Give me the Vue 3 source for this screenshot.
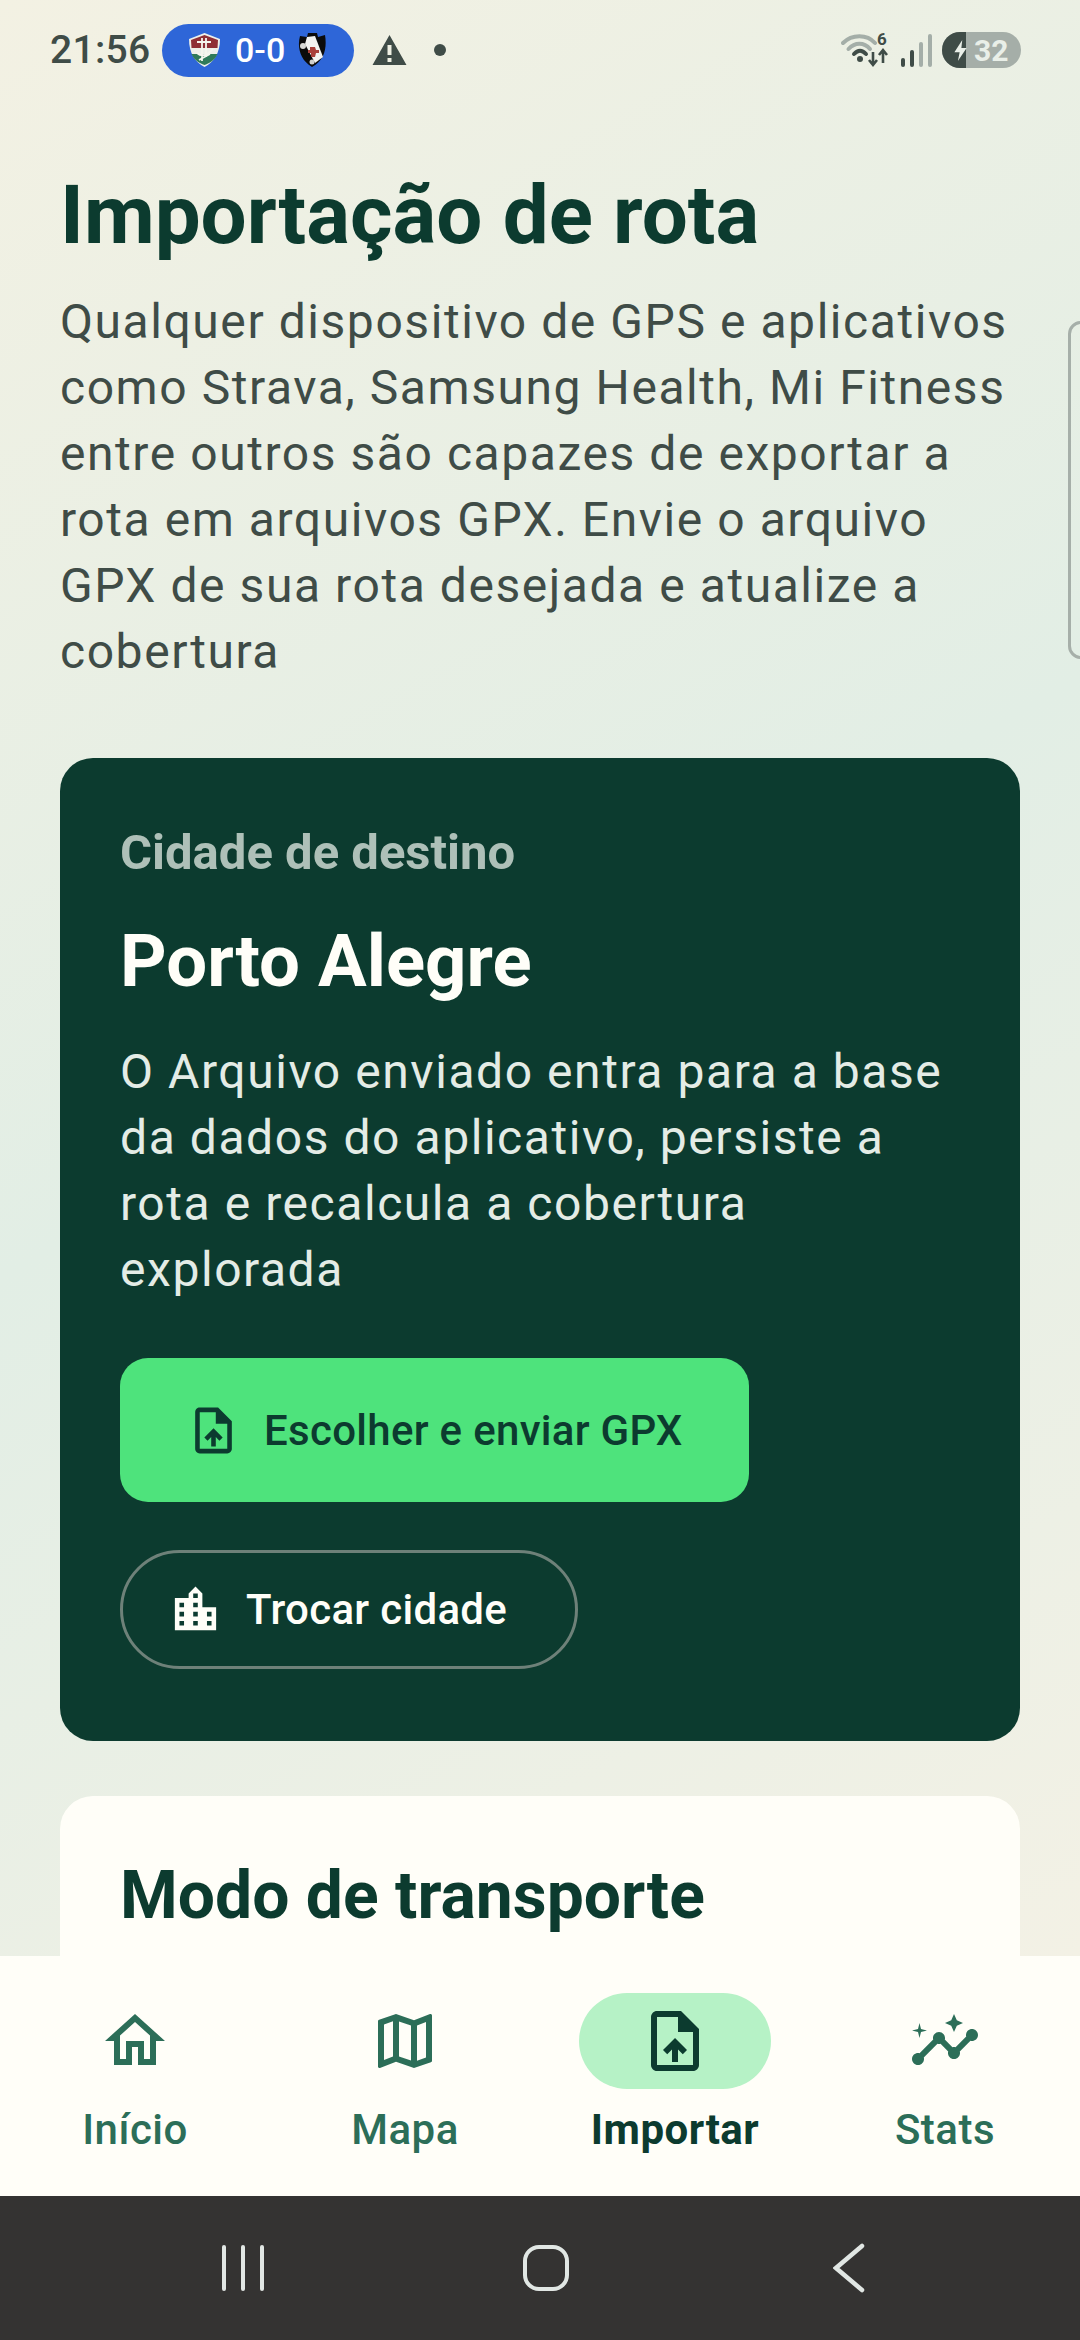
<script setup>
const lines1 = ['Qualquer dispositivo de GPS e aplicativos','como Strava, Samsung Health, Mi Fitness','entre outros são capazes de exportar a','rota em arquivos GPX. Envie o arquivo','GPX de sua rota desejada e atualize a','cobertura']
const lines2 = ['O Arquivo enviado entra para a base','da dados do aplicativo, persiste a','rota e recalcula a cobertura','explorada']
const UPLOAD = 'M14 2H6c-1.1 0-1.99.9-1.99 2L4 20c0 1.1.89 2 1.99 2H18c1.1 0 2-.9 2-2V8l-6-6zm4 18H6V4h7v5h5v11zM8 15.01l1.41 1.41L11 14.84V19h2v-4.16l1.59 1.59L16 15.01 12.01 11 8 15.01z'
const nav = [
  { label: 'Início', d: 'M12 5.69l5 4.5V18h-2v-6H9v6H7v-7.81L12 5.69M12 3L2 12h3v8h6v-6h2v6h6v-8h3L12 3z' },
  { label: 'Mapa', d: 'M20.5 3l-.16.03L15 5.1 9 3 3.36 4.9c-.21.07-.36.25-.36.48V20.5c0 .28.22.5.5.5l.16-.03L9 18.9l6 2.1 5.64-1.9c.21-.07.36-.25.36-.48V3.5c0-.28-.22-.5-.5-.5zM10 5.47l4 1.4v11.66l-4-1.4V5.47zm-5 .99l3-1.01v11.7l-3 1.16V6.46zm14 11.08l-3 1.01V6.86l3-1.16v11.84z' },
  { label: 'Importar', d: 'M14 2H6c-1.1 0-1.99.9-1.99 2L4 20c0 1.1.89 2 1.99 2H18c1.1 0 2-.9 2-2V8l-6-6zm4 18H6V4h7v5h5v11zM8 15.01l1.41 1.41L11 14.84V19h2v-4.16l1.59 1.59L16 15.01 12.01 11 8 15.01z', active: true },
  { label: 'Stats', d: 'M21 8c-1.45 0-2.26 1.44-1.93 2.51l-3.55 3.56c-.3-.09-.74-.09-1.04 0l-2.55-2.55C12.27 10.45 11.46 9 10 9c-1.45 0-2.27 1.44-1.93 2.52l-4.56 4.55C2.44 15.74 1 16.55 1 18c0 1.1.9 2 2 2 1.45 0 2.26-1.44 1.93-2.51l4.55-4.56c.3.09.74.09 1.04 0l2.55 2.55C12.73 16.55 13.54 18 15 18c1.45 0 2.27-1.44 1.93-2.52l3.56-3.55c1.07.33 2.51-.48 2.51-1.93 0-1.1-.9-2-2-2zM15 9l.94-2.07L18 6l-2.06-.93L15 3l-.92 2.07L12 6l2.08.93zM3.5 11L4 9l2-.5L4 8l-.5-2L3 8l-2 .5L3 9z' }
]
</script>

<template>
  <div class="phone">
    <div class="main">
      <header class="status">
        <span class="time">21:56</span>
        <div class="score">
          <svg class="crest" viewBox="0 0 31 34">
            <path d="M15.500 0 L31 6 C31 20 25 29 15.500 34 C6 29 0 20 0 6 Z" fill="#eef0ea"/>
            <path d="M15.500 2 L29 7 L28.500 15 L2.500 15 L2 7 Z" fill="#8f2f36"/>
            <path d="M2.500 21 H28.500 C26 27 21 30 15.500 32 C10 30 5 27 2.500 21Z" fill="#2f7a5a"/>
            <path d="M13 5 V28 M17 5 V24 M8 9 H22 M8 20 Q15 26 24 16 M10 27 L21 21" stroke="#f6f5ee" stroke-width="1.800" fill="none"/>
          </svg>
          <span class="goals">0-0</span>
          <svg class="crest vasco" viewBox="0 0 28 34">
            <path d="M2 3 L9 4 L10 0 H19 L20 4 L27 2 C29 14 27 27 14 34 C2 27 -1 14 2 3Z" fill="#0b0b0b"/>
            <path d="M9 4 L17 3 L25 24 L17 30 L7 11Z" fill="#f3f3f0"/>
            <path d="M12 14 h5 l1 3 h3 v3 h-3 l-1 4 h-4 v-4 h-3 v-3 h2z" fill="#a9403a"/>
            <circle cx="5" cy="13" r="3" fill="#d9d9d5"/>
            <circle cx="14" cy="29" r="2.500" fill="#cfcfcb"/>
          </svg>
        </div>
        <svg class="warn" viewBox="0 0 34 30"><path d="M17 0 L34 30 H0 Z M15 10 V20 H19 V10 Z M15 23 V27 H19 V23 Z" fill="#3f4c47" fill-rule="evenodd"/></svg>
        <span class="dot"></span>
        <span class="grow"></span>
        <div class="wifi-wrap">
          <svg class="wifi" viewBox="0 0 48 36">
            <path d="M2 11 C11 2 26 2 34 11" fill="none" stroke="#a4aea8" stroke-width="4" stroke-linecap="round"/>
            <path d="M7.500 17 C14 10 23 10 29 17" fill="none" stroke="#a4aea8" stroke-width="4" stroke-linecap="round"/>
            <path d="M13 22 C17 17.500 21 17.500 25 22" fill="none" stroke="#3f4c47" stroke-width="4" stroke-linecap="round"/>
            <circle cx="19" cy="27" r="3" fill="#3f4c47"/>
            <path d="M32 20 V33 M28 28 L32 33 L36 28 M42 31 V18 M38 23 L42 18 L46 23" fill="none" stroke="#3f4c47" stroke-width="2.600"/>
          </svg>
          <span class="wifi-num">6</span>
        </div>
        <div class="bars">
          <span class="bar b1"></span><span class="bar b2"></span><span class="bar b3"></span><span class="bar b4"></span>
        </div>
        <div class="battery">
          <span class="batt-fill"></span>
          <svg viewBox="0 0 16 24" class="bolt"><path d="M10 0 L1 14 H7 L5 24 L15 9 H9 Z" fill="#e9efe8"/></svg>
          <span class="batt-num">32</span>
        </div>
      </header>

      <div class="content">
        <h1 class="title">Importação de rota</h1>
        <p class="lead"><span v-for="l in lines1" :key="l" class="line">{{ l }}</span></p>

        <section class="card dark">
          <div class="eyebrow">Cidade de destino</div>
          <h2 class="city">Porto Alegre</h2>
          <p class="desc"><span v-for="l in lines2" :key="l" class="line">{{ l }}</span></p>
          <button class="primary">
            <svg class="btn-icon" viewBox="0 0 24 24"><path :d="UPLOAD" fill="#0c3b2f"/></svg>
            <span>Escolher e enviar GPX</span>
          </button>
          <button class="outline">
            <svg class="btn-icon" viewBox="0 0 24 24"><path d="M15 11V5l-3-3-3 3v2H3v14h18V11h-6zm-8 8H5v-2h2v2zm0-4H5v-2h2v2zm0-4H5V9h2v2zm6 8h-2v-2h2v2zm0-4h-2v-2h2v2zm0-4h-2V9h2v2zm0-4h-2V5h2v2zm6 12h-2v-2h2v2zm0-4h-2v-2h2v2z" fill="#fffef8"/></svg>
            <span>Trocar cidade</span>
          </button>
        </section>

        <section class="card light">
          <h2 class="mode">Modo de transporte</h2>
        </section>
      </div>
    </div>

    <nav class="tabs">
      <div v-for="n in nav" :key="n.label" class="tab" :class="{ active: n.active }">
        <div class="pill">
          <svg class="tab-icon" viewBox="0 0 24 24"><path :d="n.d"/></svg>
        </div>
        <span class="tab-label">{{ n.label }}</span>
      </div>
    </nav>

    <div class="sysnav">
      <div class="recents"><i></i><i></i><i></i></div>
      <span class="homebtn"></span>
      <svg class="back" viewBox="0 0 32 50"><path d="M29 3 L3 25 L29 47" fill="none" stroke="#e1e7e4" stroke-width="4.500" stroke-linecap="round" stroke-linejoin="miter"/></svg>
    </div>

    <div class="edge"></div>
  </div>
</template>

<style>
html, body { margin: 0; padding: 0; }
</style>

<style scoped>
.phone {
  position: relative;
  width: 1080px;
  height: 2340px;
  overflow: hidden;
  display: flex;
  flex-direction: column;
  font-family: Roboto, "Noto Sans", sans-serif;
}
.main { flex: 1; min-height: 0; overflow: hidden; background: linear-gradient(151deg, #f3f1e3 0%, #e2eee5 50%, #f3f1e5 100%); }

.status { height: 100px; box-sizing: border-box; padding: 0 59px 0 50px; display: flex; align-items: center; color: #3f4c47; }
.time { font-size: 39px; font-weight: 500; letter-spacing: 0.3px; width: 112px; }
.score { width: 192px; height: 53px; border-radius: 27px; background: #2e66d8; display: flex; align-items: center; padding-left: 27px; box-sizing: border-box; flex: none; }
.crest { width: 31px; height: 34px; flex: none; }
.goals { color: #fff; font-size: 34px; font-weight: 500; margin: 0 15px; width: 48px; flex: none; white-space: nowrap; text-align: center; }
.vasco { width: 28px; }
.warn { width: 35px; height: 30px; margin-left: 18px; }
.dot { width: 12px; height: 12px; border-radius: 50%; background: #3f4c47; margin-left: 27px; }
.grow { flex: 1; }
.wifi-wrap { position: relative; width: 48px; height: 36px; }
.wifi { display: block; width: 48px; height: 36px; }
.wifi-num { position: absolute; left: 36px; top: -3px; font-size: 17px; line-height: 20px; font-weight: 700; color: #3f4c47; }
.bars { display: flex; align-items: flex-end; gap: 5px; height: 34px; margin-left: 12px; }
.bar { width: 4px; border-radius: 2px; background: #a4aea8; }
.b1, .b2 { background: #3f4c47; }
.b1 { height: 9px; } .b2 { height: 17px; } .b3 { height: 25px; } .b4 { height: 33px; }
.battery { position: relative; width: 79px; height: 36px; border-radius: 18px; background: #a5aea8; margin-left: 10px; display: flex; overflow: hidden; align-items: center; }
.batt-fill { width: 24px; height: 36px; background: #3f4c47; flex: none; }
.bolt { position: absolute; left: 11px; top: 8px; width: 15px; height: 21px; }
.batt-num { color: #e9efe8; font-size: 30px; font-weight: 700; margin-left: 8px; }

.content { padding: 71px 60px 0; }
.title { margin: 0; font-size: 81.700px; line-height: 88px; font-weight: 700; color: #0c3b2f; }
.lead { margin: 30px 0 0; font-size: 48px; line-height: 66px; letter-spacing: 1.560px; color: #3f4c47; }
.line { display: block; white-space: nowrap; }

.card { border-radius: 33px; box-sizing: border-box; padding: 0 60px; }
.dark { background: #0c3b2f; margin-top: 73px; height: 983px; padding-top: 62px; }
.eyebrow { font-size: 49px; line-height: 66px; font-weight: 700; color: #aec0b8; }
.city { margin: 32px 0 0; font-size: 72.500px; line-height: 88px; font-weight: 700; color: #fffef8; }
.desc { margin: 33px 0 0; font-size: 48px; line-height: 66px; letter-spacing: 1.560px; color: #e4ece6; }
.primary, .outline { display: flex; align-items: center; font-family: inherit; font-weight: 500; cursor: pointer; }
.primary { margin-top: 55px; width: 629px; height: 144px; border: 0; border-radius: 28px; background: #4ee37c; color: #0c3b2f; font-size: 42px; padding: 0 0 0 66px; gap: 23px; letter-spacing: 0.3px; }
.outline { margin-top: 48px; width: 458px; height: 119px; border: 3px solid #6e8179; border-radius: 60px; background: transparent; color: #fffef8; font-size: 42px; padding: 0 0 0 45px; gap: 23px; box-sizing: border-box; letter-spacing: 0.3px; }
.btn-icon { width: 55px; height: 55px; flex: none; }

.light { background: #fffef8; margin-top: 55px; height: 300px; padding-top: 56px; }
.mode { margin: 0; font-size: 66px; line-height: 88px; font-weight: 700; color: #0c3b2f; }

.tabs { height: 240px; flex: none; background: #fffef8; display: grid; grid-template-columns: repeat(4, 270px); padding-top: 37px; box-sizing: border-box; }
.tab { display: flex; flex-direction: column; align-items: center; }
.pill { width: 192px; height: 96px; border-radius: 48px; display: flex; align-items: center; justify-content: center; }
.active .pill { background: #b6f2c6; }
.tab-icon { width: 72px; height: 72px; fill: #2c6e58; }
.active .tab-icon { fill: #0c3b2f; }
.tab-label { margin-top: 12px; font-size: 42px; line-height: 58px; font-weight: 500; color: #2c6e58; letter-spacing: 0.5px; white-space: nowrap; }
.active .tab-label { color: #0c3b2f; font-weight: 700; }

.sysnav { height: 144px; flex: none; background: #343332; display: flex; align-items: center; }
.recents { display: flex; gap: 15px; margin-left: 222px; }
.recents i { display: block; width: 4px; height: 46px; border-radius: 2px; background: #e1e7e4; }
.homebtn { width: 46px; height: 46px; box-sizing: border-box; margin-left: 259px; border: 4.500px solid #e1e7e4; border-radius: 16px; }
.back { width: 32px; height: 50px; margin-left: 264px; }

.edge { position: absolute; right: -14px; top: 321px; width: 26px; height: 338px; border: 3px solid #a6afa9; border-radius: 18px; box-sizing: border-box; }
</style>
